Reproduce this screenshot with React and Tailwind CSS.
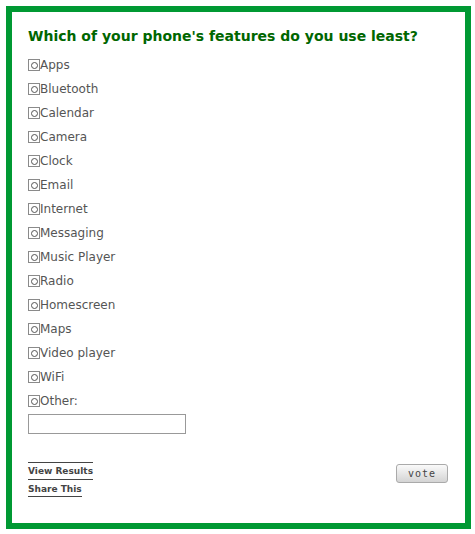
const options = [
  "Apps",
  "Bluetooth",
  "Calendar",
  "Camera",
  "Clock",
  "Email",
  "Internet",
  "Messaging",
  "Music Player",
  "Radio",
  "Homescreen",
  "Maps",
  "Video player",
  "WiFi",
  "Other:",
];

function Radio() {
  return (
    <span className="flex h-[12px] w-[12px] items-center justify-center border border-[#8a8a8a] bg-white">
      <span className="h-[7px] w-[7px] rounded-full border border-[#555]" />
    </span>
  );
}

export default function App() {
  return (
    <div className="h-[534px] w-[475px] bg-white p-[6px] font-['DejaVu_Sans',Verdana,sans-serif]">
      <div className="h-[523px] w-[465px] border-[6px] border-[#009933] px-[16px] pt-[15px]">
        <h2 className="text-[14px] font-bold leading-[18px] text-[#006600]">
          Which of your phone's features do you use least?
        </h2>
        <ul className="mt-[8px]">
          {options.map((opt) => (
            <li key={opt} className="flex h-[24px] items-center text-[12px] text-[#555]">
              <Radio />
              <span>{opt}</span>
            </li>
          ))}
        </ul>
        <input
          type="text"
          className="mt-[1px] block h-[20px] w-[158px] border border-[#999] bg-white outline-none"
        />
        <div className="mt-[28px] flex items-start justify-between pr-[1px]">
          <div className="flex flex-col items-start text-[9px] font-bold leading-[12px] text-[#444]">
            <a className="border-y border-[#444] py-[2px]">View Results</a>
            <a className="border-b border-[#444] pt-[3px] pb-[1px]">Share This</a>
          </div>
          <button className="mt-[2px] h-[19px] w-[52px] rounded-[3px] border border-[#aaa] bg-gradient-to-b from-[#fafafa] to-[#d4d4d4] font-['DejaVu_Sans_Mono',monospace] text-[10px] tracking-[1px] text-[#444]">
            vote
          </button>
        </div>
      </div>
    </div>
  );
}
